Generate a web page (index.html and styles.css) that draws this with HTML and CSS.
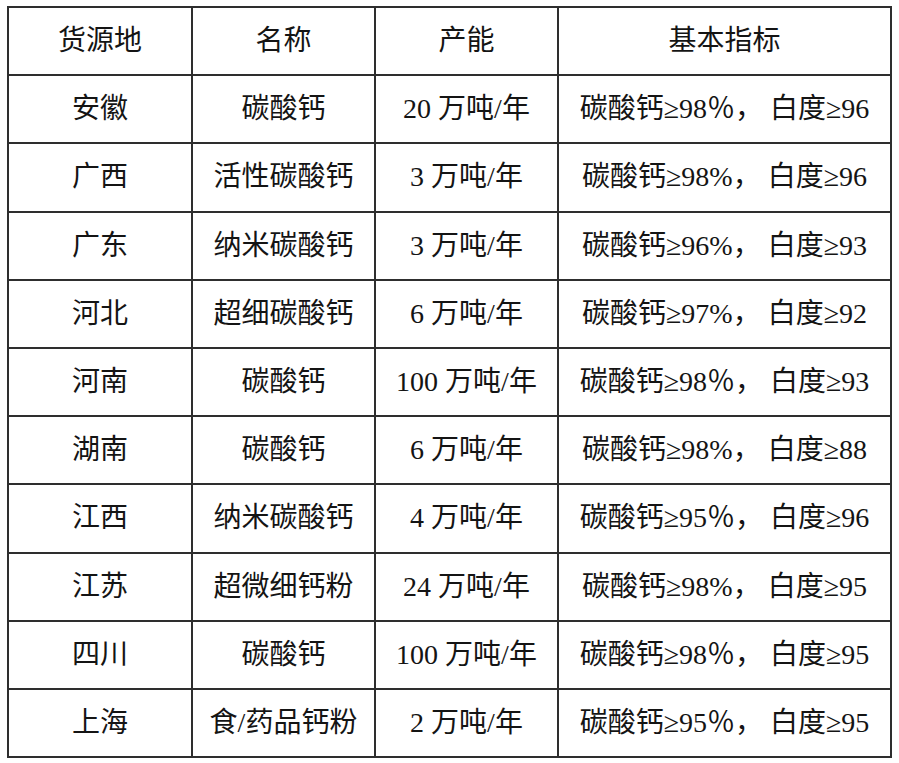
FILE: index.html
```html
<!DOCTYPE html>
<html lang="zh-CN">
<head>
<meta charset="utf-8">
<title>碳酸钙货源</title>
<link rel="stylesheet" href="styles.css">
</head>
<body>
<table class="spec-table">
  <colgroup>
    <col class="c-origin">
    <col class="c-name">
    <col class="c-cap">
    <col class="c-spec">
  </colgroup>
  <thead>
    <tr><th>货源地</th><th>名称</th><th>产能</th><th>基本指标</th></tr>
  </thead>
  <tbody>
    <tr><td>安徽</td><td>碳酸钙</td><td>20 万吨/年</td><td>碳酸钙≥98％， 白度≥96</td></tr>
    <tr><td>广西</td><td>活性碳酸钙</td><td>3 万吨/年</td><td>碳酸钙≥98%， 白度≥96</td></tr>
    <tr><td>广东</td><td>纳米碳酸钙</td><td>3 万吨/年</td><td>碳酸钙≥96%， 白度≥93</td></tr>
    <tr><td>河北</td><td>超细碳酸钙</td><td>6 万吨/年</td><td>碳酸钙≥97%， 白度≥92</td></tr>
    <tr><td>河南</td><td>碳酸钙</td><td>100 万吨/年</td><td>碳酸钙≥98％， 白度≥93</td></tr>
    <tr><td>湖南</td><td>碳酸钙</td><td>6 万吨/年</td><td>碳酸钙≥98%， 白度≥88</td></tr>
    <tr><td>江西</td><td>纳米碳酸钙</td><td>4 万吨/年</td><td>碳酸钙≥95％， 白度≥96</td></tr>
    <tr><td>江苏</td><td>超微细钙粉</td><td>24 万吨/年</td><td>碳酸钙≥98%， 白度≥95</td></tr>
    <tr><td>四川</td><td>碳酸钙</td><td>100 万吨/年</td><td>碳酸钙≥98％， 白度≥95</td></tr>
    <tr><td>上海</td><td>食/药品钙粉</td><td>2 万吨/年</td><td>碳酸钙≥95％， 白度≥95</td></tr>
  </tbody>
</table>
</body>
</html>
```
FILE: styles.css
```css
html, body {
  margin: 0;
  padding: 0;
  background: #ffffff;
}

body {
  padding: 6px 0 0 7px;
  font-family: "Liberation Serif", "Noto Sans CJK SC", serif;
  color: #141414;
}

.spec-table {
  border-collapse: collapse;
  table-layout: fixed;
  width: 883px;
}

.c-origin { width: 184px; }
.c-name { width: 183px; }
.c-cap { width: 183px; }
.c-spec { width: 333px; }

.spec-table th,
.spec-table td {
  border: 2px solid #2e2e2e;
  height: 66.2px;
  padding: 0;
  text-align: center;
  vertical-align: middle;
  font-size: 28px;
  font-weight: normal;
  line-height: 1;
  white-space: nowrap;
}

.spec-table tbody td {
  border-top-color: #6a6a6a;
}
```
